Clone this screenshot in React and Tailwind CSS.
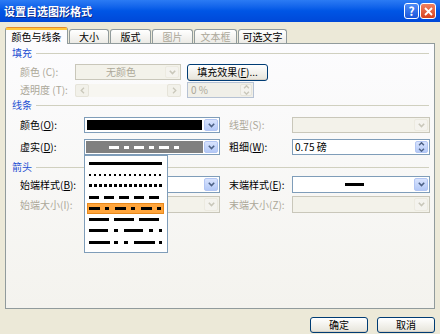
import React from 'react';

// little "v" used by XP combo boxes
const Chevron = ({ dir = 'down' }) => {
    const d = {
        down: 'M0.8 0.8 L3.5 3.5 L6.2 0.8',
        up: 'M0.8 3.5 L3.5 0.8 L6.2 3.5',
    }[dir];
    return (
        <svg width="7" height="5" viewBox="0 0 7 5" className="block">
            <path d={d} fill="none" stroke="currentColor" strokeWidth="1.6" />
        </svg>
    );
};

const SideChevron = ({ dir }) => (
    <svg width="5" height="7" viewBox="0 0 5 7" className="block">
        <path d={dir === 'left' ? 'M4 0.8 L1.2 3.5 L4 6.2' : 'M1 0.8 L3.8 3.5 L1 6.2'} fill="none" stroke="currentColor" strokeWidth="1.3" />
    </svg>
);

const DropBtn = ({ disabled }) => (
    <div
        className={
            disabled
                ? 'w-[14px] shrink-0 flex items-center justify-center rounded-[2px] border border-[#ECEAE0] bg-[#F4F3EE] text-[#C9C7BA]'
                : 'w-[14px] shrink-0 flex items-center justify-center rounded-[2px] border border-[#B3C6F3] bg-linear-to-b from-[#D8E3FD] to-[#B4C9F7] text-[#4D6185]'
        }
    >
        <Chevron />
    </div>
);

const Combo = ({ className, disabled, children, inner = '' }) => (
    <div className={`${className} relative flex border p-px ${disabled ? 'border-[#C9C7BA] bg-[#F3F2EA]' : 'border-[#7F9DB9] bg-white'}`}>
        <div className={`flex-1 min-w-0 flex items-center ${inner}`}>{children}</div>
        <DropBtn disabled={disabled} />
    </div>
);

const Label = ({ text, k, className, disabled, spaced }) => (
    <div className={`${className} shrink-0 text-[10px] leading-none whitespace-nowrap ${disabled ? 'text-[#ACA899]' : 'text-black'}`}>
        {text}
        {spaced ? ' ' : ''}(
        {disabled ? k : <span className="underline">{k}</span>}):
    </div>
);

const Section = ({ title, className }) => (
    <div className={`${className} flex items-center h-[12px] pl-[6px] pr-[5px]`}>
        <span className="text-[10px] leading-none text-[#1E50D2]">{title}</span>
        <div className="flex-1 ml-[4px] h-px bg-[#D0D0BF]" />
    </div>
);

const LineSample = ({ dash, width = 3, len = 73, color = '#000' }) => (
    <svg width={len} height={width} className="block">
        <line x1="0" y1={width / 2} x2={len} y2={width / 2} stroke={color} strokeWidth={width} strokeDasharray={dash} shapeRendering="crispEdges" />
    </svg>
);

const dashStyles = [
    { h: 'h-[12px]', dash: undefined, w: 3 },
    { h: 'h-[11px]', dash: '2 3', w: 2 },
    { h: 'h-[11px]', dash: '3 2', w: 3 },
    { h: 'h-[12px]', dash: '10 5', w: 3 },
    { h: 'h-[11px]', dash: '11 4.5 4.5 6', w: 3, selected: true },
    { h: 'h-[11px]', dash: '19.5 5.5', w: 3 },
    { h: 'h-[11px]', dash: '19 5.5 4.5 6', w: 3 },
    { h: 'h-[12px]', dash: '21 4 4.3 5.7 4.3 5.7', w: 3 },
];

const XpButton = ({ className, children }) => (
    <div className={`${className} flex items-center justify-center rounded-[3px] border border-[#003C74] bg-linear-to-b from-white to-[#E6E4DA] text-[10px] leading-none text-black shadow-[inset_0_-1px_0_#D6D0C5]`}>
        {children}
    </div>
);

const Tab = ({ className, disabled, children }) => (
    <div
        className={`${className} h-[14px] flex items-center justify-center rounded-t-[3px] border border-b-0 border-[#919B9C] bg-linear-to-b from-white to-[#ECEBE6] text-[10px] leading-none ${disabled ? 'text-[#ACA899]' : 'text-black'}`}
    >
        {children}
    </div>
);

export default function App() {
    return (
        <div className="w-[440px] h-[334px] overflow-hidden flex flex-col bg-[#ECE9D8] font-['Noto_Sans_CJK_SC','Noto_Sans',sans-serif]">
            {/* Title bar */}
            <div className="h-[22px] shrink-0 flex items-center pl-[4px] pr-[4px] bg-linear-to-b from-[#2B7BF4] via-[#0055E5] to-[#0048D8]">
                <div className="flex-1 text-[11px] leading-none font-bold text-white tracking-[0px] [text-shadow:1px_1px_0_#0A2A8A]">设置自选图形格式</div>
                <div className="flex gap-[1px]">
                    <div className="w-[15px] h-[16px] rounded-[3px] border border-white bg-linear-to-b from-[#4E8CF7] to-[#1A55DA] flex items-center justify-center text-white text-[12px] font-bold leading-none">?</div>
                    <div className="w-[16px] h-[16px] rounded-[3px] border border-white bg-linear-to-b from-[#F08060] to-[#D6401C] flex items-center justify-center">
                        <svg width="9" height="9" viewBox="0 0 9 9" className="block">
                            <path d="M1 1 L8 8 M8 1 L1 8" stroke="#fff" strokeWidth="1.8" />
                        </svg>
                    </div>
                </div>
            </div>

            {/* Tabs */}
            <div className="pt-[5px] pl-[5px] h-[21px] shrink-0 flex items-end gap-[1px] relative z-10">
                <div className="w-[63px] h-[17px] -mb-px flex flex-col rounded-t-[3px] border-x border-t border-[#919B9C] border-t-[#E68B2C] bg-[#FCFCFE]">
                    <div className="h-[2px] bg-[#FFC83C]" />
                    <div className="flex-1 flex items-center justify-center text-[10px] leading-none text-black">颜色与线条</div>
                </div>
                <Tab className="w-[40px]">大小</Tab>
                <Tab className="w-[41px]">版式</Tab>
                <Tab className="w-[41px]" disabled>图片</Tab>
                <Tab className="w-[43px]" disabled>文本框</Tab>
                <Tab className="w-[49px]">可选文字</Tab>
            </div>

            {/* Panel */}
            <div className="ml-[5px] w-[430px] h-[266px] shrink-0 border border-[#919B9C] bg-linear-to-b from-[#FCFCFE] to-[#F4F3EE] flex flex-col">
                <Section title="填充" className="mt-[3px]" />

                <div className="mt-[5px] h-[16px] flex items-center pl-[14px]">
                    <Label text="颜色" k="C" disabled spaced className="w-[55px]" />
                    <Combo className="w-[106px] h-full" disabled inner="justify-center">
                        <span className="text-[10px] leading-none text-[#ACA899]">无颜色</span>
                    </Combo>
                    <XpButton className="ml-[6px] w-[81px] h-[17px]">
                        填充效果(<span className="underline">F</span>)...
                    </XpButton>
                </div>

                <div className="mt-[2px] h-[16px] flex items-center pl-[14px]">
                    <Label text="透明度" k="T" disabled spaced className="w-[55px]" />
                    <div className="w-[106px] h-[13px] flex bg-[#F7F6F1]">
                        <div className="w-[14px] flex items-center justify-center rounded-[2px] border border-[#E6E4DA] bg-[#F2F1EA] text-[#C9C7BA]">
                            <SideChevron dir="left" />
                        </div>
                        <div className="flex-1" />
                        <div className="w-[14px] flex items-center justify-center rounded-[2px] border border-[#E6E4DA] bg-[#F2F1EA] text-[#C9C7BA]">
                            <SideChevron dir="right" />
                        </div>
                    </div>
                    <div className="ml-[6px] w-[67px] h-[16px] flex border border-[#B6C2D4] bg-[#F0EFE8] p-px">
                        <div className="flex-1 flex items-center pl-[2px] text-[10px] leading-none text-[#ACA899]">0 %</div>
                        <div className="w-[12px] flex flex-col items-center justify-center gap-[1px] rounded-[2px] bg-[#F4F3EE] border border-[#E6E4DA] text-[#C9C7BA]">
                            <Chevron dir="up" />
                            <Chevron dir="down" />
                        </div>
                    </div>
                </div>

                <Section title="线条" className="mt-[1px]" />

                <div className="mt-[6px] h-[16px] flex items-center pl-[14px]">
                    <Label text="颜色" k="O" className="w-[64px]" />
                    <Combo className="w-[136px] h-full" inner="pr-[1px]">
                        <div className="w-full h-full border border-white bg-black" />
                    </Combo>
                    <Label text="线型" k="S" disabled className="ml-[9px] w-[63px]" />
                    <Combo className="w-[138px] h-full" disabled />
                </div>

                <div className="mt-[6px] h-[16px] flex items-center pl-[14px] relative z-20">
                    <Label text="虚实" k="D" className="w-[64px]" />
                    <div className="w-[136px] h-full relative">
                        <Combo className="w-full h-full" inner="justify-center bg-[#808080] mr-[1px]">
                            <LineSample dash="10 5 5 5" width={3} len={72} color="#fff" />
                        </Combo>
                        {/* open dropdown list */}
                        <div className="absolute left-0 top-[16px] w-[84px] h-[98px] border border-[#7F9DB9] bg-white pt-px z-30">
                            {dashStyles.map((s, i) => (
                                <div key={i} className={`${s.h} flex items-center`}>
                                    {s.selected ? (
                                        <div className="ml-[2px] w-[77px] h-full flex items-center justify-center border border-[#E8891C] bg-[#FFA53C]">
                                            <LineSample dash={s.dash} width={s.w} />
                                        </div>
                                    ) : (
                                        <div className="ml-[4px]">
                                            <LineSample dash={s.dash} width={s.w} />
                                        </div>
                                    )}
                                </div>
                            ))}
                        </div>
                    </div>
                    <Label text="粗细" k="W" className="ml-[9px] w-[63px]" />
                    <div className="w-[138px] h-full flex border border-[#7F9DB9] bg-white p-px">
                        <div className="flex-1 flex items-center pl-[1px] text-[10px] leading-none text-black">0.75 磅</div>
                        <div className="w-[13px] flex flex-col items-center justify-center gap-[1px] rounded-[2px] border border-[#B3C6F3] bg-linear-to-b from-[#D8E3FD] to-[#B4C9F7] text-[#4D6185]">
                            <Chevron dir="up" />
                            <Chevron dir="down" />
                        </div>
                    </div>
                </div>

                <Section title="箭头" className="mt-[6px]" />

                <div className="mt-[3px] h-[17px] flex items-center pl-[14px]">
                    <Label text="始端样式" k="B" className="w-[64px]" />
                    <Combo className="w-[136px] h-full" />
                    <Label text="末端样式" k="E" className="ml-[9px] w-[63px]" />
                    <Combo className="w-[138px] h-full" inner="justify-center">
                        <LineSample width={3} len={19} />
                    </Combo>
                </div>

                <div className="mt-[3px] h-[17px] flex items-center pl-[14px]">
                    <Label text="始端大小" k="I" disabled className="w-[64px]" />
                    <Combo className="w-[136px] h-full" disabled />
                    <Label text="末端大小" k="Z" disabled className="ml-[9px] w-[63px]" />
                    <Combo className="w-[138px] h-full" disabled />
                </div>
            </div>

            {/* Dialog buttons */}
            <div className="mt-[8px] h-[16px] flex justify-end gap-[9px] pr-[5px]">
                <XpButton className="w-[58px] h-full">确定</XpButton>
                <XpButton className="w-[58px] h-full">取消</XpButton>
            </div>
        </div>
    );
}
